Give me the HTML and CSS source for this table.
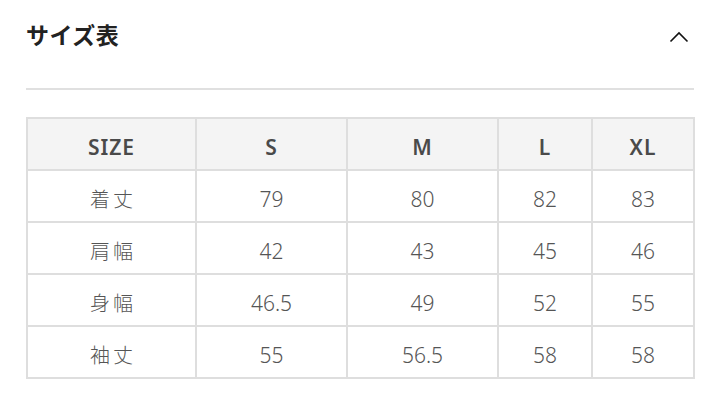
FILE: index.html
```html
<!DOCTYPE html>
<html lang="ja">
<head>
<meta charset="utf-8">
<link rel="stylesheet" href="styles.css">
</head>
<body>
<section class="panel">
  <header class="head">
    <h2 class="title">サイズ表</h2>
    <svg class="chev" width="20" height="12" viewBox="0 0 20 12"><path d="M1.5 10.5 L10 2 L18.5 10.5" fill="none" stroke="#111" stroke-width="1.6"/></svg>
  </header>
  <div class="rule"></div>
  <table class="sizes">
    <colgroup><col class="c1"><col class="c2"><col class="c3"><col class="c4"><col class="c5"></colgroup>
    <thead>
      <tr><th>SIZE</th><th>S</th><th>M</th><th>L</th><th>XL</th></tr>
    </thead>
    <tbody>
      <tr><td class="jp">着丈</td><td>79</td><td>80</td><td>82</td><td>83</td></tr>
      <tr><td class="jp">肩幅</td><td>42</td><td>43</td><td>45</td><td>46</td></tr>
      <tr><td class="jp">身幅</td><td>46.5</td><td>49</td><td>52</td><td>55</td></tr>
      <tr><td class="jp">袖丈</td><td>55</td><td>56.5</td><td>58</td><td>58</td></tr>
    </tbody>
  </table>
</section>
</body>
</html>
```
FILE: styles.css
```css
html, body {
  margin: 0;
  padding: 0;
  background: #fff;
}
body {
  font-family: "Noto Sans", "Noto Sans CJK JP", sans-serif;
  color: #555;
}
.panel {
  width: 668px;
  padding: 0 0 0 26px;
}
.head {
  height: 70px;
  display: flex;
  align-items: center;
  justify-content: space-between;
}
.title {
  margin: 0;
  margin-top: -3px;
  font-family: "Noto Sans CJK JP", sans-serif;
  font-size: 23px;
  font-weight: 700;
  color: #222;
  letter-spacing: 0.5px;
}
.chev {
  margin-right: 5px;
  margin-top: 3px;
}
.rule {
  height: 2px;
  background: #e0e0e0;
  margin-top: 18px;
}
.sizes {
  margin-top: 27px;
  width: 667px;
  border-collapse: collapse;
  table-layout: fixed;
  font-size: 21px;
}
.sizes th, .sizes td {
  border: 2px solid #dedede;
  height: 52px;
  padding: 6px 0 0 0;
  box-sizing: border-box;
  text-align: center;
  color: #555;
  font-weight: 300;
  line-height: 1;
}
.sizes th {
  background: #f4f4f4;
  font-weight: 600;
  font-size: 21px;
  letter-spacing: 1px;
  color: #4a4a4a;
}
.sizes td.jp {
  font-family: "Noto Sans CJK JP", sans-serif;
  font-weight: 300;
  font-size: 20px;
  letter-spacing: 3px;
  text-indent: 3px;
}
.c1 { width: 169px; }
.c2 { width: 151px; }
.c3 { width: 151px; }
.c4 { width: 94px; }
.c5 { width: 102px; }
```
